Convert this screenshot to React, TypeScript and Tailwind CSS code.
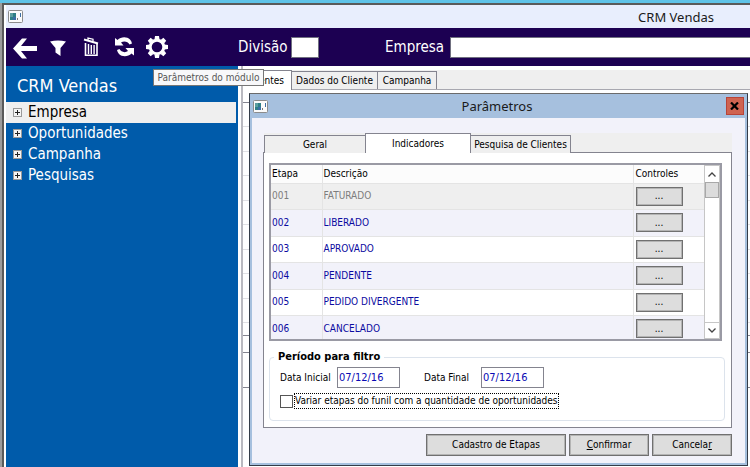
import type { ReactNode } from "react";

const TREE = ["Empresa", "Oportunidades", "Campanha", "Pesquisas"];

const STAGES = [
  { code: "001", name: "FATURADO" },
  { code: "002", name: "LIBERADO" },
  { code: "003", name: "APROVADO" },
  { code: "004", name: "PENDENTE" },
  { code: "005", name: "PEDIDO DIVERGENTE" },
  { code: "006", name: "CANCELADO" },
];

const ui = "font-['DejaVu_Sans_Condensed','DejaVu_Sans',sans-serif]";
const title = "font-['Noto_Sans','Open_Sans',sans-serif]";

function WindowIcon() {
  return (
    <svg width="15" height="13" viewBox="0 0 15 13" aria-hidden="true">
      <rect x="0.5" y="0.5" width="14" height="12" rx="1" fill="#fbfbfb" stroke="#8c8c8c" />
      <rect x="2" y="3" width="6" height="7" fill="#2f7f86" />
      <rect x="2" y="3" width="3" height="4" fill="#5c9ea0" />
      <rect x="5" y="7" width="3" height="3" fill="#3c6ea5" />
      <rect x="9" y="8" width="1" height="2" fill="#777" />
      <rect x="12" y="3" width="1" height="4" fill="#3c6ea5" />
    </svg>
  );
}

function BackIcon() {
  return (
    <svg width="26" height="22" viewBox="0 0 26 22" className="translate-y-px" aria-hidden="true">
      <path d="M1 11.500 10 1.500h5L9 9h16v5H9l6 7.500h-5z" fill="#fff" />
    </svg>
  );
}

function FilterIcon() {
  return (
    <svg width="16" height="16" viewBox="0 0 16 16" className="translate-y-px" aria-hidden="true">
      <path d="M0 1.500Q8-0.500 16 1.500L10.500 8v8L5.500 12.500V8z" fill="#fff" />
    </svg>
  );
}

function TrashIcon() {
  return (
    <svg width="16" height="20" viewBox="0 0 16 20" aria-hidden="true">
      <g fill="none" stroke="#fff">
        <path d="M1 2.500 15 6.500" strokeWidth="2" />
        <path d="M5 3V1L10 2.200v2" strokeWidth="1.300" />
        <path d="M2.500 6v12.200h11.500V7" strokeWidth="1.600" />
        <path d="M5.500 7v10M8.300 8v9M11.100 8v9" strokeWidth="1.400" />
      </g>
    </svg>
  );
}

function RefreshIcon() {
  const half = "M0 1 2.500 3C6-0.500 12-0.500 15 2.500Q16.500 4 17 6.500L14.500 7.500C13 4.500 9 3.500 6 5.500L8.500 8.500H0z";
  return (
    <svg width="19" height="20" viewBox="0 0 19 20" aria-hidden="true">
      <path d={half} fill="#fff" />
      <path d={half} fill="#fff" transform="rotate(180 9.5 9.8)" />
    </svg>
  );
}

function GearIcon() {
  const teeth = [0, 45, 90, 135, 180, 225, 270, 315];
  return (
    <svg width="22" height="22" viewBox="-11 -11 22 22" aria-hidden="true">
      <circle r="6.800" fill="none" stroke="#fff" strokeWidth="3" />
      {teeth.map((a) => (
        <path key={a} d="M-2.500-7.500-2-11H2L2.500-7.500z" fill="#fff" transform={`rotate(${a})`} />
      ))}
    </svg>
  );
}

function ToolButton({ label, children }: { label: string; children: ReactNode }) {
  return (
    <button type="button" aria-label={label} className="flex w-[26px] items-center justify-center">
      {children}
    </button>
  );
}

function GreyButton({ className, children }: { className: string; children: ReactNode }) {
  return (
    <button
      type="button"
      className={`border border-[#707070] bg-[#dddddd] text-black shadow-[inset_0_0_0_1px_#b4b4b4] ${className}`}
    >
      {children}
    </button>
  );
}

function Chevron({ d }: { d: string }) {
  return (
    <svg width="8" height="5" viewBox="0 0 8 5" aria-hidden="true">
      <path d={d} fill="none" stroke="#444" strokeWidth="1.300" />
    </svg>
  );
}

function StageTable() {
  return (
    <div className="flex h-[178px] overflow-hidden border-2 border-[#9a9aa4] bg-white">
      <div className="min-w-0 flex-1 overflow-hidden">
        <table className="w-full table-fixed border-collapse text-[10px] leading-[14px]">
          <colgroup>
            <col className="w-[51px]" />
            <col />
            <col className="w-[71px]" />
          </colgroup>
          <thead>
            <tr className="h-[18px] bg-[#fcfcfc] text-left text-black">
              <th className="border-b border-r border-[#e4e4e4] p-0 pl-px font-normal">Etapa</th>
              <th className="border-b border-r border-[#e4e4e4] p-0 pl-px font-normal">Descrição</th>
              <th className="border-b border-[#e4e4e4] p-0 pl-0.5 font-normal">Controles</th>
            </tr>
          </thead>
          <tbody className="text-[#0a0aa0]">
            {STAGES.map((s, i) => (
              <tr
                key={s.code}
                className={
                  i === 0
                    ? "h-[26px] bg-[#efefef] text-[#7d7d7d]"
                    : "h-[26px] odd:bg-white even:h-[27px] even:bg-[#f2f2fa]"
                }
              >
                <td className="border-b border-r border-[#e4e4e4] p-0 pl-px">{s.code}</td>
                <td className="border-b border-r border-[#e4e4e4] p-0 pl-px">{s.name}</td>
                <td className="border-b border-[#e4e4e4] p-0 pl-0.5">
                  <GreyButton className="block h-[19px] w-[47px] leading-[14px]">...</GreyButton>
                </td>
              </tr>
            ))}
          </tbody>
        </table>
      </div>
      <div className="flex w-4 flex-col border border-[#c6c6c6] bg-white" aria-hidden="true">
        <div className="flex h-4 items-center justify-center">
          <Chevron d="M0.500 4.500 4 1l3.500 3.500" />
        </div>
        <div className="h-4 border border-[#a8a8a8] bg-[#dcdcdc]" />
        <div className="flex-1" />
        <div className="flex h-4 items-center justify-center border-t border-[#c6c6c6]">
          <Chevron d="M0.500 0.500 4 4 7.500 0.500" />
        </div>
      </div>
    </div>
  );
}

function PeriodFilter() {
  const field = "h-[21px] w-[63px] border border-[#84848f] bg-white px-px text-[11px] text-[#0a0ab4] outline-none";
  return (
    <fieldset className="mt-[9px] h-[71px] rounded border border-[#dce3ec] pl-2.5 leading-[14px]">
      <legend className="-ml-1.5 px-1 text-[11px] font-bold">Período para filtro</legend>
      <div className="flex items-center pt-[3px]">
        <label htmlFor="start" className="w-[57px] whitespace-nowrap">Data Inicial</label>
        <input id="start" defaultValue="07/12/16" className={field} />
        <label htmlFor="end" className="ml-6 w-[57px] whitespace-nowrap">Data Final</label>
        <input id="end" defaultValue="07/12/16" className={field} />
      </div>
      <div className="mt-[5px] flex items-center gap-px">
        <input id="vary" type="checkbox" className="size-[13px] appearance-none border border-[#555] bg-white" />
        <label htmlFor="vary" className="whitespace-nowrap border border-dotted border-black">
          Variar etapas do funil com a quantidade de oportunidades
        </label>
      </div>
    </fieldset>
  );
}

function ParametersDialog() {
  const tab = "border border-b-0 border-[#84848f] bg-[#efefef]";
  return (
    <section
      role="dialog"
      aria-label="Parâmetros"
      className="absolute top-[27px] right-0.5 bottom-px left-[243px] flex flex-col border border-[#343c48] border-t-[#6b6b6b] bg-[#f2f2fa]"
    >
      <header className="flex h-6 shrink-0 items-center justify-between bg-[#a6c0de] px-[3px]">
        <WindowIcon />
        <h2 className={`text-[13px] leading-5 text-[#1a1a1a] ${title}`}>Parâmetros</h2>
        <button
          type="button"
          aria-label="Fechar"
          className="flex h-[18px] w-[18px] items-center justify-center border border-[#b84438] bg-[#cf6350]"
        >
          <svg width="9" height="8" viewBox="0 0 9 8" aria-hidden="true">
            <path d="M1 0.500 8 7.500M8 0.500 1 7.500" stroke="#000" strokeWidth="2.200" />
          </svg>
        </button>
      </header>
      <div className="flex flex-1 flex-col border-2 border-t-0 border-[#a6c0de] pr-[13px] pl-[11px] pt-[15px] text-[10px] leading-[14px]">
        <div role="tablist" className="relative z-10 -mb-px ml-px flex h-5 items-end bg-[#efefef]">
          <button role="tab" type="button" className={`h-[18px] w-[101px] border-r-0 ${tab}`}>Geral</button>
          <button role="tab" type="button" aria-selected="true" className="h-5 w-[106px] border border-b-0 border-[#84848f] bg-white">
            Indicadores
          </button>
          <button role="tab" type="button" className={`h-[18px] w-[100px] whitespace-nowrap border-l-0 ${tab}`}>
            Pesquisa de Clientes
          </button>
          <div className="h-px flex-1 bg-[#84848f]" />
        </div>
        <div className="h-[276px] border border-[#84848f] bg-white pt-2.5 pr-[6px] pl-[5px]">
          <div className="pr-[3px]">
            <StageTable />
          </div>
          <PeriodFilter />
        </div>
        <footer className="mt-[6px] flex justify-end gap-[3px]">
          <GreyButton className="h-[22px] w-[140px]">Cadastro de Etapas</GreyButton>
          <GreyButton className="h-[22px] w-[80px]"><u>C</u>onfirmar</GreyButton>
          <GreyButton className="h-[22px] w-[80px]">Cancela<u>r</u></GreyButton>
        </footer>
      </div>
    </section>
  );
}

function Sidebar() {
  return (
    <aside className="w-[232px] shrink-0 bg-[#005baa] text-white">
      <h2 className="flex h-9 items-center pt-1 pl-[11px] text-[18px] leading-6">CRM Vendas</h2>
      <ul className="mr-0.5 text-[15px] leading-[21px]">
        {TREE.map((item) => (
          <li key={item} className="flex h-[21px] items-center gap-[6px] pl-[7px] first:bg-[#efefef] first:text-black">
            <svg width="9" height="9" viewBox="0 0 9 9" aria-hidden="true">
              <rect x="0.500" y="0.500" width="8" height="8" fill="#f4f4f4" stroke="#9a9a9a" />
              <path d="M2 4.500h5M4.500 2v5" stroke="#222" />
            </svg>
            {item}
          </li>
        ))}
      </ul>
    </aside>
  );
}

export default function App() {
  const backTab = "flex items-center border border-b-0 border-l-0 border-[#84848f] whitespace-nowrap";
  return (
    <div className={`flex h-screen flex-col overflow-hidden bg-white text-black ${ui}`}>
      <div className="h-[3px] shrink-0 bg-[#5fc3e8]" />
      <div className="flex min-h-0 flex-1 border-l-2 border-[#9c9c9c]">
        <div className="flex min-w-0 flex-1 flex-col border-t-2 border-l-2 border-[#5a5a5a] pl-0.5">
          <header className="flex h-[23px] shrink-0 items-center justify-between bg-[#e8eefd] pr-9 pl-0.5">
            <WindowIcon />
            <h1 className={`text-[13px] leading-5 text-[#1a1a1a] ${title}`}>CRM Vendas</h1>
          </header>
          <div className="flex h-[38px] shrink-0 items-center bg-[#1c0052] text-[15px] text-white">
            <div className="flex w-[232px] items-center gap-[7px] pl-1.5">
              <ToolButton label="Voltar"><BackIcon /></ToolButton>
              <ToolButton label="Filtrar"><FilterIcon /></ToolButton>
              <ToolButton label="Excluir"><TrashIcon /></ToolButton>
              <ToolButton label="Atualizar"><RefreshIcon /></ToolButton>
              <ToolButton label="Parâmetros do módulo"><GearIcon /></ToolButton>
            </div>
            <label htmlFor="division" className="w-[53px]">Divisão</label>
            <input id="division" className="h-[21px] w-7 border border-[#707080] bg-white text-black" />
            <label htmlFor="company" className="ml-[66px] w-[65px]">Empresa</label>
            <input id="company" className="h-[21px] min-w-0 flex-1 border border-r-0 border-[#707080] bg-white text-black" />
          </div>
          <div className="relative flex min-h-0 flex-1">
            <Sidebar />
            <main className="ml-[3px] flex min-w-0 flex-1 flex-col border-l-2 border-[#b9b9c0] pt-1">
              <div role="tablist" className="flex h-5 shrink-0 items-end border-b border-[#a8a8b0] bg-[#efefef] text-[10px] leading-[14px]">
                <div role="tab" aria-selected="true" className={`-mb-px h-5 w-[49px] justify-end bg-white pr-[7px] ${backTab}`}>Clientes</div>
                <div role="tab" className={`h-[18px] w-[86px] justify-center ${backTab}`}>Dados do Cliente</div>
                <div role="tab" className={`h-[18px] w-[59px] justify-center ${backTab}`}>Campanha</div>
              </div>
              <div className="mt-3 flex-1 border-t border-[#84848f]">
                {Array.from({ length: 9 }, (_, i) => (
                  <div key={i} className="h-6 border-b border-[#e0e0e4] even:h-[25px]" />
                ))}
                <div className="mt-3 h-[18px] border-y border-[#84848f]" />
                <div className="h-[35px] border-b border-[#84848f]" />
              </div>
            </main>
            <ParametersDialog />
            <div
              role="tooltip"
              className="absolute top-[3px] left-[147px] flex h-[17px] w-[111px] items-center justify-center border border-[#767676] bg-[#f8f8fa] text-[10px] whitespace-nowrap text-[#575757]"
            >
              Parâmetros do módulo
            </div>
          </div>
        </div>
      </div>
    </div>
  );
}
